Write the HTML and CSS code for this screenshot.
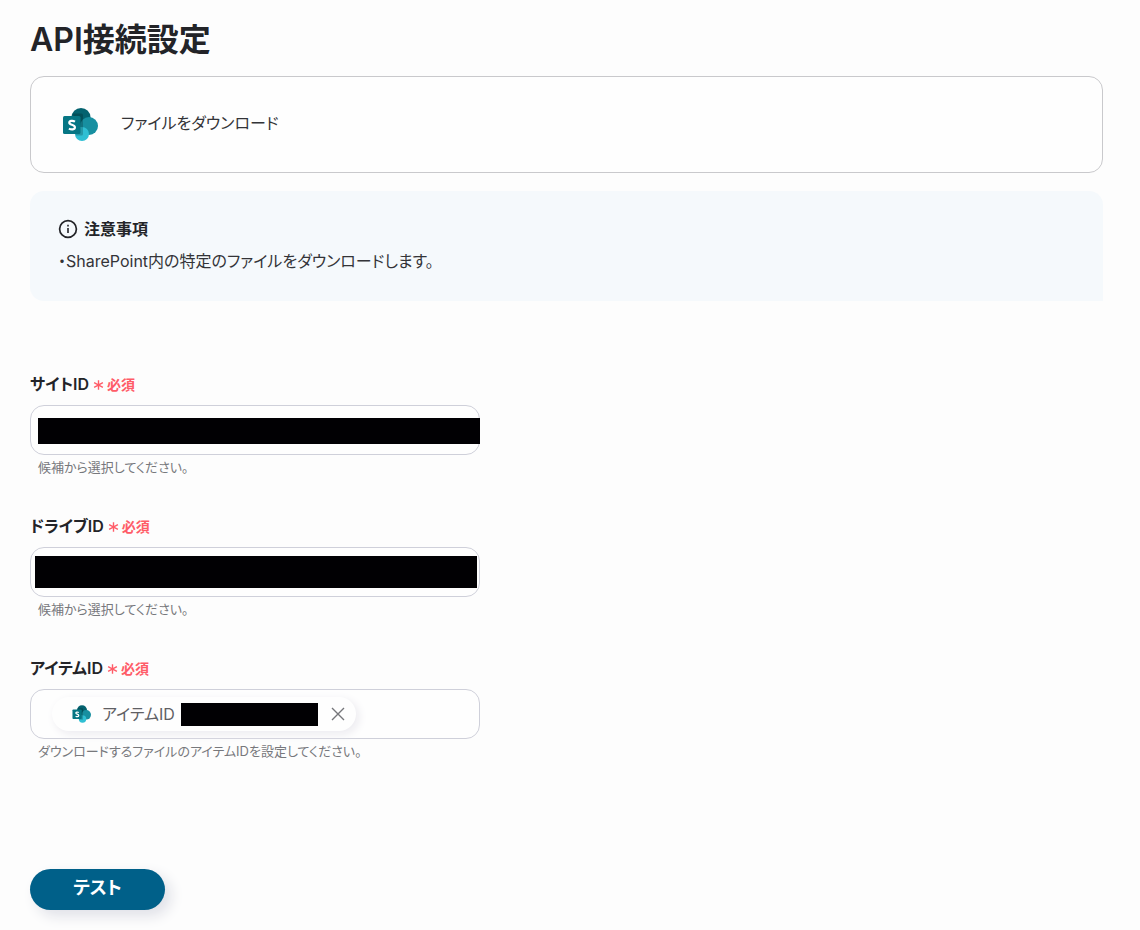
FILE: index.html
```html
<!DOCTYPE html>
<html lang="ja">
<head>
<meta charset="utf-8">
<meta name="viewport" content="width=device-width, initial-scale=1">
<title>API接続設定</title>
<link rel="stylesheet" href="styles.css">
</head>
<body>
<svg class="defs" width="0" height="0" aria-hidden="true">
  <defs>
    <symbol id="sharepoint" viewBox="0 0 36 34">
      <circle cx="18" cy="10" r="9.600" fill="#04626f"/>
      <circle cx="26" cy="18.500" r="9" fill="#178fa0"/>
      <circle cx="19" cy="26.500" r="7" fill="#2fbfd3"/>
      <path d="M10 6h8.500a1.500 1.500 0 0 1 1.500 1.500v19a1.500 1.500 0 0 1-1.500 1.500H12.600A7 7 0 0 1 13 24z" fill="#000" opacity=".2"/>
      <rect x="0" y="8.500" width="17.500" height="18" rx="1.500" fill="#067684"/>
      <path d="M12 14.100C9.800 12.900 6.300 13.100 6.300 15.300c0 2.400 5.600 1.600 5.600 4.500 0 2.500-3.600 2.600-6 1.300" fill="none" stroke="#fff" stroke-width="2.200"/>
    </symbol>
    <symbol id="asterisk" viewBox="0 0 12 12">
      <path d="M6 .8v10.400M1.200 3.400l9.600 5.200M10.800 3.400l-9.600 5.200" fill="none" stroke="currentColor" stroke-width="1.500"/>
    </symbol>
  </defs>
</svg>
<main class="page">
  <h1 class="title">API接続設定</h1>
  <section class="action">
    <svg class="action-icon" aria-hidden="true"><use href="#sharepoint"/></svg>
    <p class="action-name">ファイルをダウンロード</p>
  </section>
  <section class="notice">
    <h2 class="notice-title">
      <svg class="notice-icon" viewBox="0 0 20 20" aria-hidden="true">
        <circle cx="10" cy="10" r="8.400" fill="none" stroke="currentColor" stroke-width="1.700"/>
        <path d="M10 9v5M10 5.800v1.700" stroke="currentColor" stroke-width="1.600"/>
      </svg>
      注意事項
    </h2>
    <p class="notice-text">・SharePoint内の特定のファイルをダウンロードします。</p>
  </section>
  <form class="form">
    <div class="field">
      <label class="label" for="site">サイトID<span class="required"><svg class="mark" aria-hidden="true"><use href="#asterisk"/></svg>必須</span></label>
      <div class="control control-site"><input class="masked" id="site" type="text"></div>
      <p class="hint">候補から選択してください。</p>
    </div>
    <div class="field">
      <label class="label" for="drive">ドライブID<span class="required"><svg class="mark" aria-hidden="true"><use href="#asterisk"/></svg>必須</span></label>
      <div class="control control-drive"><input class="masked" id="drive" type="text"></div>
      <p class="hint">候補から選択してください。</p>
    </div>
    <div class="field">
      <label class="label" for="item">アイテムID<span class="required"><svg class="mark" aria-hidden="true"><use href="#asterisk"/></svg>必須</span></label>
      <div class="control control-item">
        <div class="chip">
          <svg class="chip-icon" aria-hidden="true"><use href="#sharepoint"/></svg>
          <span class="chip-name">アイテムID</span>
          <span class="chip-value"></span>
          <button class="chip-remove" type="button" aria-label="削除">
            <svg class="cross" viewBox="0 0 14 14" aria-hidden="true"><path d="M1 1l12 12M13 1L1 13" stroke="currentColor" stroke-width="1.400"/></svg>
          </button>
        </div>
        <input class="free" id="item" type="text">
      </div>
      <p class="hint">ダウンロードするファイルのアイテムIDを設定してください。</p>
    </div>
    <button class="submit" type="button">テスト</button>
  </form>
</main>
</body>
</html>
```
FILE: styles.css
```css
* {
  box-sizing: border-box;
}

body {
  margin: 0;
  background: #fdfdfd;
  color: #232428;
  font-family: Inter, "Noto Sans CJK JP", sans-serif;
  font-size: 16px;
  line-height: 24px;
  font-feature-settings: "palt";
}

h1, h2, p {
  margin: 0;
}

.defs {
  position: absolute;
}

.page {
  padding: 16px 37px 20px 30px;
}

.title {
  font-size: 32px;
  line-height: 48px;
  font-weight: 600;
}

.action {
  display: flex;
  align-items: center;
  gap: 22px;
  margin-top: 12px;
  padding: 30px 32px;
  border: 1px solid #c9c9cc;
  border-radius: 14px;
  background: #fefefe;
}

.action-icon {
  width: 36px;
  height: 35px;
}

.action-name {
  padding-bottom: 4px;
  color: #333438;
}

.notice {
  margin-top: 18px;
  padding: 26px 28px 28px;
  border-radius: 14px 14px 0 14px;
  background: #f5f9fc;
}

.notice-title {
  display: flex;
  align-items: center;
  gap: 6px;
  font-size: 16px;
  line-height: 24px;
  font-weight: 600;
}

.notice-icon {
  width: 20px;
  height: 20px;
}

.notice-text {
  margin-top: 8px;
  color: #333438;
}

.form {
  margin-top: 70px;
}

.field {
  max-width: 450px;
  margin-bottom: 36px;
}

.label {
  display: flex;
  align-items: center;
  gap: 4px;
  font-weight: 600;
  line-height: 24px;
}

.required {
  display: flex;
  align-items: center;
  gap: 3px;
  padding-top: 2px;
  color: #ff5c68;
  font-size: 14px;
}

.mark {
  width: 11px;
  height: 12px;
}

.control {
  display: flex;
  align-items: center;
  height: 50px;
  margin-top: 8px;
  border: 1px solid #cfd0da;
  border-radius: 14px;
  background: #fefefe;
}

.masked {
  flex: 1;
  min-width: 0;
  height: 26px;
  padding: 0 8px;
  border: 0;
  background: #010003;
  color: #010003;
  font: inherit;
}

.control-site {
  padding: 2px 0 0 7px;
}

.control-site .masked {
  margin-right: -1px;
}

.control-drive {
  padding: 0 2px 0 4px;
}

.control-drive .masked {
  height: 32px;
}

.control-item {
  padding: 0 21px;
}

.chip {
  display: flex;
  align-items: center;
  height: 34px;
  padding: 0 10px 0 20px;
  border-radius: 17px;
  background: #fefefe;
  box-shadow: 3px 3px 10px #ebeaef;
}

.chip-icon {
  width: 20px;
  height: 18px;
  margin-right: 10px;
}

.chip-name {
  color: #5f6064;
}

.chip-value {
  width: 137px;
  height: 23px;
  margin: 0 12px 0 6px;
  background: #010003;
}

.chip-remove {
  display: flex;
  padding: 1px;
  border: 0;
  background: none;
  color: #75767a;
}

.cross {
  width: 14px;
  height: 14px;
}

.free {
  flex: 1;
  min-width: 0;
  border: 0;
  background: none;
  font: inherit;
}

.hint {
  margin: 2px 8px 0;
  color: #77787c;
  font-size: 13px;
  line-height: 20px;
}

.submit {
  min-width: 135px;
  height: 41px;
  margin-top: 72px;
  padding: 0 24px 3px;
  border: 0;
  border-radius: 21px;
  background: #006089;
  color: #fff;
  box-shadow: 6px 6px 14px #dfe0e7;
  font: inherit;
  font-size: 18px;
  font-weight: 700;
}
```
